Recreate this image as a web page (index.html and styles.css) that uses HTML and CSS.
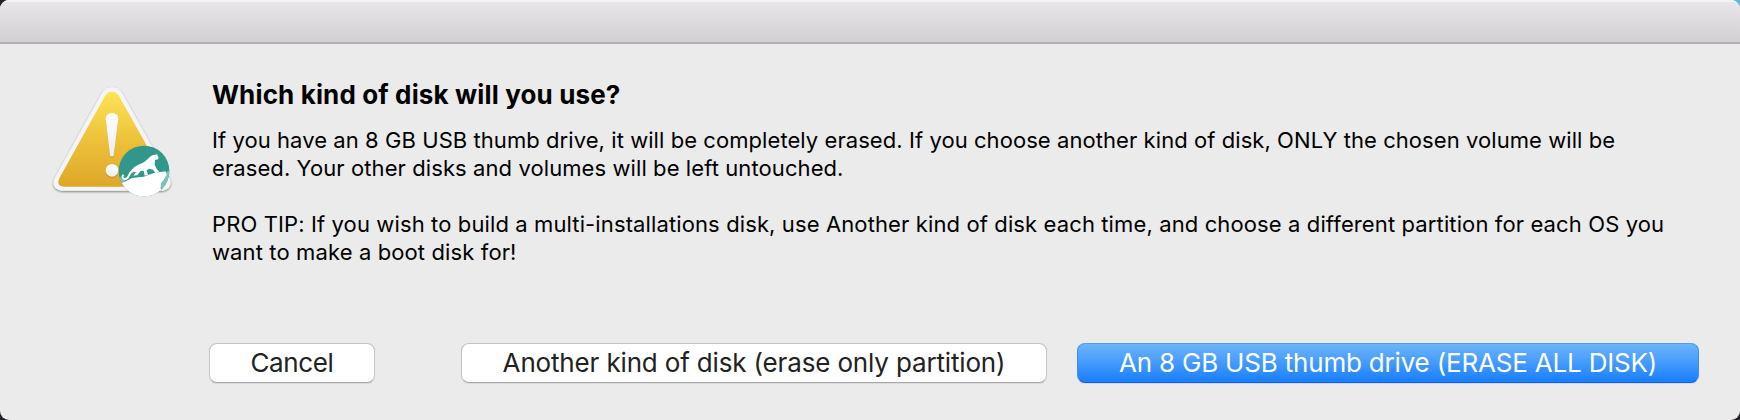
FILE: index.html
```html
<!DOCTYPE html>
<html lang="en">
<head>
<meta charset="utf-8">
<title>Choose a disk</title>
<link rel="stylesheet" href="styles.css">
</head>
<body>
<main class="dialog">
  <header class="titlebar"></header>
  <section class="content">
    <svg class="alert-icon" viewBox="0 0 435 405" aria-hidden="true">
      <defs>
        <linearGradient id="gold" x1="0" y1="0" x2="0" y2="1">
          <stop offset="0" stop-color="#fde456"/>
          <stop offset="0.5" stop-color="#eec23a"/>
          <stop offset="1" stop-color="#dda728"/>
        </linearGradient>
        <linearGradient id="mark" x1="0" y1="0" x2="0" y2="1">
          <stop offset="0" stop-color="#ffffff"/>
          <stop offset="1" stop-color="#ededed"/>
        </linearGradient>
        <filter id="shade" x="-10%" y="-10%" width="120%" height="125%">
          <feDropShadow dx="0" dy="3" stdDeviation="2.5" flood-color="#000" flood-opacity="0.5"/>
        </filter>
        <filter id="soft" x="-20%" y="-10%" width="140%" height="125%">
          <feDropShadow dx="0" dy="2" stdDeviation="1.5" flood-color="#8a6500" flood-opacity="0.7"/>
        </filter>
        <clipPath id="disc"><circle cx="312" cy="288" r="76"/></clipPath>
      </defs>
      <path filter="url(#shade)" fill="#f5f5f5" d="M186 53Q197 37 216 37Q235 37 246 53L387 306Q396 324 388 336Q380 347 362 347L70 347Q52 347 44 336Q36 324 46 306Z"/>
      <path fill="url(#gold)" d="M195 63Q202 50 216 50Q230 50 237 63L373 306Q388 335 358 335L75 335Q45 335 60 306Z"/>
      <g filter="url(#soft)" fill="url(#mark)">
        <path d="M197 133Q197 114 216 114Q235 114 235 133L221 241Q220 245 216 245Q211 245 210 241Z"/>
        <circle cx="216" cy="286" r="19"/>
      </g>
      <circle cx="312" cy="288" r="76" fill="#31978b"/>
      <g clip-path="url(#disc)">
        <path fill="#80c2ba" d="M380 291L390 286L390 325L366 350L362 328ZM236 304L256 317L246 330Z"/>
        <path fill="#fff" d="M238 328L251 322L276 309L311 305L341 294L377 289L380 299L372 313L363 325L362 341L371 352L350 370L240 370Z"/>
        <path fill="#fff" d="M270 294C276 278 291 271 306 265C317 261 327 246 337 241L353 238L352 243L356 246L354 253L345 255L344 269L350 282L358 290L347 295L339 284L328 281L320 286L324 299L314 302L311 288L302 287L293 300L280 302L288 291L280 290Z"/>
        <path fill="none" stroke="#fff" stroke-width="6" stroke-linecap="round" d="M278 289C264 293 269 312 256 312C248 312 245 305 249 301"/>
      </g>
    </svg>
    <div class="copy">
      <h1 class="heading">Which kind of disk will you use?</h1>
      <p class="message"><span class="line line-a">If you have an 8 GB USB thumb drive, it will be completely erased. If you choose another kind of disk, ONLY the chosen volume will be</span>
      <span class="line line-b">erased. Your other disks and volumes will be left untouched.</span></p>
      <p class="message"><span class="line line-c">PRO TIP: If you wish to build a multi-installations disk, use Another kind of disk each time, and choose a different partition for each OS you</span>
      <span class="line line-d">want to make a boot disk for!</span></p>
    </div>
  </section>
  <footer class="actions">
    <button class="button cancel"><span>Cancel</span></button>
    <button class="button other"><span>Another kind of disk (erase only partition)</span></button>
    <button class="button primary"><span>An 8 GB USB thumb drive (ERASE ALL DISK)</span></button>
  </footer>
</main>
</body>
</html>
```
FILE: styles.css
```css
* { box-sizing: border-box; }
body {
  margin: 0;
  font-family: Inter, "Liberation Sans", sans-serif;
  color: #000;
  background: linear-gradient(90deg, #252327 50%, #5bb9e4 50%) top / 100% 20px no-repeat, #252327;
}
.dialog {
  display: flex;
  flex-direction: column;
  width: 1740px;
  height: 420px;
  border-radius: 9px;
  overflow: hidden;
  background: #ebebeb;
}
.titlebar {
  flex: none;
  height: 44px;
  background: linear-gradient(#e9e7e9, #d2d0d2);
  border-bottom: 2px solid #b2b0b2;
  box-shadow: inset 0 2px #f4f3f4;
}
.content { display: flex; height: 299px; padding-left: 40px; }
.alert-icon { flex: none; width: 145px; height: 135px; margin-top: 31px; }
.copy { padding: 34px 0 0 27px; }
.heading { margin: 0 0 14px; font-size: 26px; line-height: 34px; font-weight: 700; letter-spacing: 0.14px; white-space: nowrap; }
.message { margin: 0 0 28px; font-size: 22px; line-height: 28px; }
.line { display: block; white-space: nowrap; }
.line-a { letter-spacing: 0.066px; }
.line-b { letter-spacing: 0.09px; }
.line-c { letter-spacing: 0.118px; }
.line-d { letter-spacing: 0.12px; }
.actions { display: flex; padding-left: 209px; }
.button {
  height: 40px;
  padding: 0;
  border: 1px solid #c4c4c4;
  border-bottom-color: #a9a9a9;
  border-radius: 8px;
  background: #fff;
  color: #222;
  font: 400 26px/36px Inter, "Liberation Sans", sans-serif;
  white-space: nowrap;
  box-shadow: 0 1px 1px rgba(0, 0, 0, .08);
}
.cancel { width: 166px; letter-spacing: -0.35px; }
.other { width: 586px; margin-left: 86px; letter-spacing: -0.155px; }
.primary {
  width: 622px;
  margin-left: 30px;
  letter-spacing: -0.19px;
  color: #fff;
  border-color: #4b9df5 #3d8cf5 #0d60f5;
  background: linear-gradient(#6eb5f9, #187eff);
}
```
